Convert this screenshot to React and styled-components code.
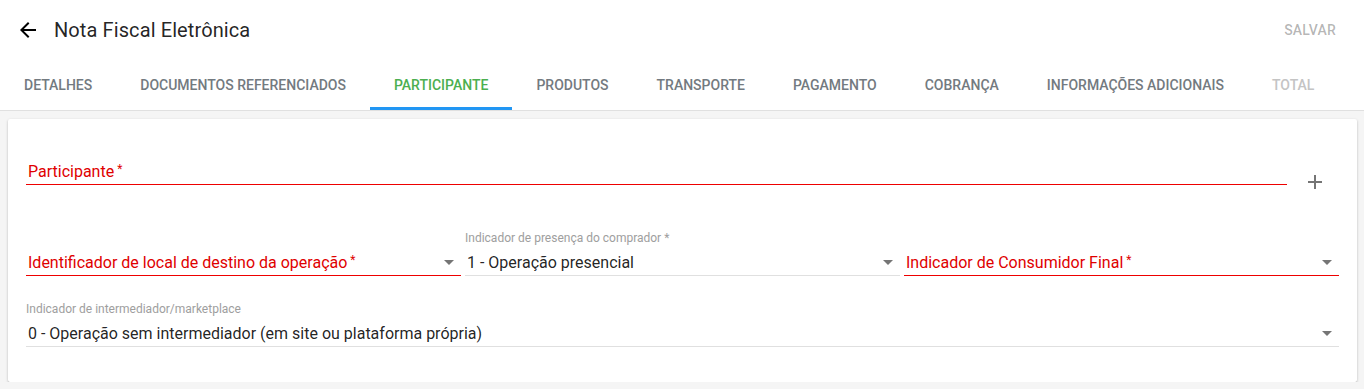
import styled, { createGlobalStyle } from "styled-components";

const GlobalStyle = createGlobalStyle`
  body {
    margin: 0;
    background: #f5f5f5;
    font-family: Roboto, "Liberation Sans", sans-serif;
  }
`;

const StyledTop = styled.div`
  background: #fff;
`;

const StyledHeader = styled.div`
  display: flex;
  align-items: center;
  height: 60px;
  padding: 0 28px 0 16px;
`;

const StyledTitle = styled.h1`
  margin: 0 0 0 14px;
  flex: 1;
  font-size: 20px;
  font-weight: 400;
  letter-spacing: 0.1px;
  color: rgba(0, 0, 0, 0.87);
`;

const StyledSave = styled.span`
  font-size: 14px;
  font-weight: 500;
  letter-spacing: 0.2px;
  color: rgba(0, 0, 0, 0.3);
`;

const StyledTabs = styled.div`
  display: flex;
  height: 50px;
  border-bottom: 1px solid #e0e0e0;
`;

const StyledTab = styled.div`
  display: flex;
  align-items: center;
  padding: 3px 24px 0;
  font-size: 14px;
  font-weight: 500;
  text-transform: uppercase;
  box-sizing: border-box;
  color: ${(p) => (p.$active ? "#4caf50" : p.$disabled ? "#c4c4c4" : "#737a80")};
  border-bottom: 3px solid ${(p) => (p.$active ? "#2196f3" : "transparent")};
`;

const StyledCard = styled.div`
  margin: 8px 7px 0 8px;
  background: #fff;
  border-radius: 2px;
  box-shadow: 0 1px 3px rgba(0, 0, 0, 0.2), 0 1px 1px rgba(0, 0, 0, 0.14);
  padding: 21px 18px 35px;
`;

const StyledFieldRow = styled.div`
  display: flex;
  align-items: flex-start;
`;

const StyledIconButton = styled.div`
  width: 48px;
  height: 48px;
  margin: 18px 0 -21px 4px;
  display: flex;
  align-items: center;
  justify-content: center;
`;

const StyledGrid = styled.div`
  display: grid;
  grid-template-columns: repeat(${(p) => p.$cols}, 1fr);
  gap: 4px;
  margin-top: ${(p) => p.$top}px;
`;

const StyledField = styled.div`
  flex: 1;
  min-width: 0;
`;

const StyledSmallLabel = styled.div`
  height: 14px;
  font-size: 12px;
  line-height: 14px;
  color: #9e9e9e;
`;

const StyledInput = styled.div`
  display: flex;
  align-items: center;
  height: 31px;
  padding: 4px 0 0 2px;
  box-sizing: border-box;
  border-bottom: 1px solid ${(p) => (p.$error ? "#ee0000" : "#e0e0e0")};
  font-size: 16px;
  color: ${(p) => (p.$error ? "#e00000" : "rgba(0, 0, 0, 0.87)")};
`;

const StyledText = styled.span`
  flex: 1;
  white-space: nowrap;
  overflow: hidden;
`;

const StyledStar = styled.span`
  font-size: 12px;
  margin-left: 3px;
  vertical-align: top;
`;

const Arrow = () => (
  <svg width="24" height="24" viewBox="0 0 24 24">
    <path d="M7 10l5 5 5-5z" fill="#757575" />
  </svg>
);

const Field = ({ label, value, error, select, required = true }) => (
  <StyledField>
    <StyledSmallLabel>
      {value && label}
      {value && required && " *"}
    </StyledSmallLabel>
    <StyledInput $error={error}>
      <StyledText>
        {value || label}
        {!value && required && <StyledStar>*</StyledStar>}
      </StyledText>
      {select && <Arrow />}
    </StyledInput>
  </StyledField>
);

const tabs = [
  "Detalhes",
  "Documentos referenciados",
  "Participante",
  "Produtos",
  "Transporte",
  "Pagamento",
  "Cobrança",
  "Informações adicionais",
  "Total",
];

const App = () => {
  return (
    <>
      <GlobalStyle />
      <StyledTop>
        <StyledHeader>
          <svg width="24" height="24" viewBox="0 0 24 24">
            <path d="M20 11H7.83l5.59-5.59L12 4l-8 8 8 8 1.41-1.41L7.83 13H20v-2z" fill="#000" />
          </svg>
          <StyledTitle>Nota Fiscal Eletrônica</StyledTitle>
          <StyledSave>SALVAR</StyledSave>
        </StyledHeader>
        <StyledTabs>
          {tabs.map((t) => (
            <StyledTab key={t} $active={t === "Participante"} $disabled={t === "Total"}>
              {t}
            </StyledTab>
          ))}
        </StyledTabs>
      </StyledTop>
      <StyledCard>
        <StyledFieldRow>
          <Field label="Participante" error />
          <StyledIconButton>
            <svg width="24" height="24" viewBox="0 0 24 24">
              <path d="M19 13h-6v6h-2v-6H5v-2h6V5h2v6h6v2z" fill="#757575" />
            </svg>
          </StyledIconButton>
        </StyledFieldRow>
        <StyledGrid $cols={3} $top={46}>
          <Field label="Identificador de local de destino da operação" error select />
          <Field label="Indicador de presença do comprador" value="1 - Operação presencial" select />
          <Field label="Indicador de Consumidor Final" error select />
        </StyledGrid>
        <StyledGrid $cols={1} $top={26}>
          <Field
            label="Indicador de intermediador/marketplace"
            value="0 - Operação sem intermediador (em site ou plataforma própria)"
            required={false}
            select
          />
        </StyledGrid>
      </StyledCard>
    </>
  );
};

export default App;
